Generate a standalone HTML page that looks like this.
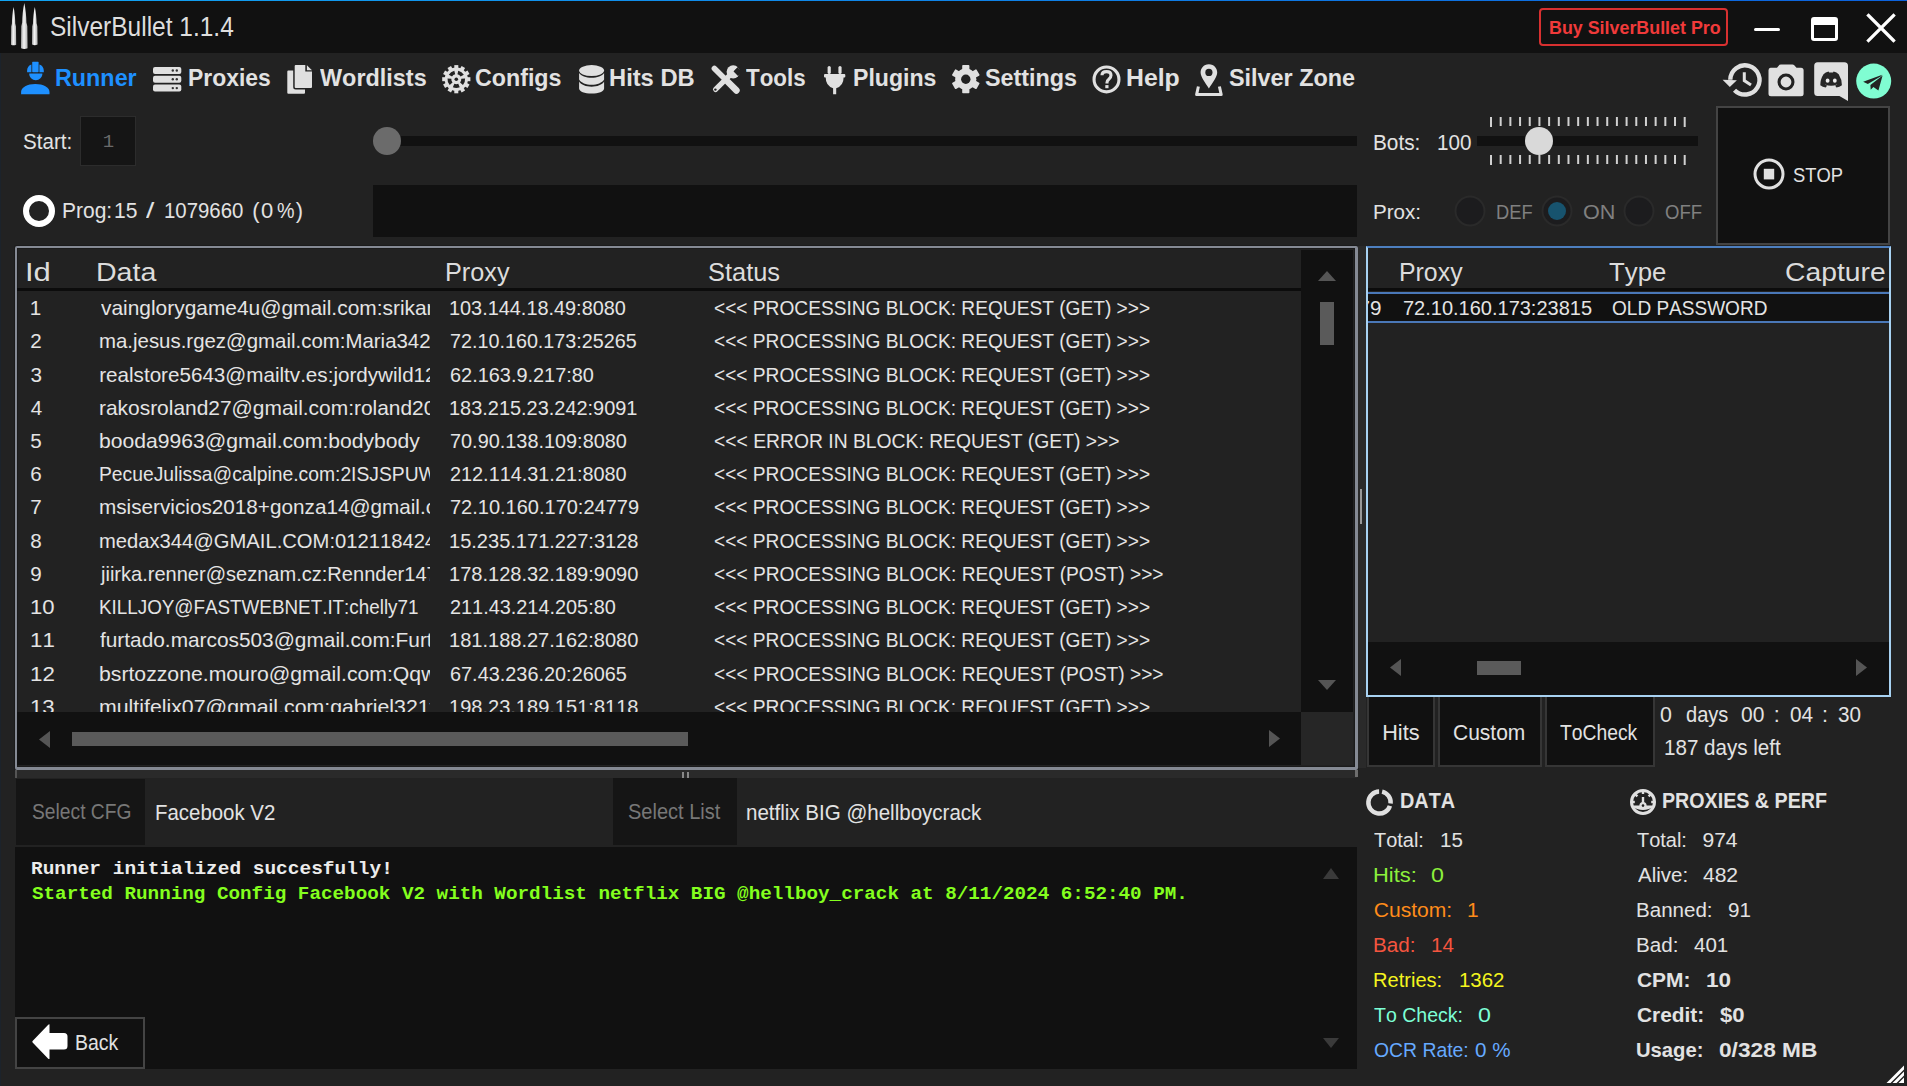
<!DOCTYPE html><html><head><meta charset="utf-8"><title>SilverBullet</title><style>
html,body{margin:0;padding:0;}
body{width:1907px;height:1086px;background:#222222;position:relative;overflow:hidden;font-family:"Liberation Sans", sans-serif;font-kerning:none;}
.r{position:absolute;box-sizing:border-box;}
.s{position:absolute;overflow:visible;}
.t{position:absolute;white-space:nowrap;line-height:1;transform-origin:0 0;font-kerning:none;}
.c{position:absolute;overflow:hidden;}
</style></head><body>
<div class="r" style="left:0px;top:0px;width:1907px;height:1px;background:linear-gradient(90deg,#12a4f2,#0c62dc);"></div>
<div class="r" style="left:0px;top:53px;width:1px;height:1033px;background:#1c232b;"></div>
<div class="r" style="left:0px;top:1px;width:1907px;height:52px;background:#111111;"></div>
<div class="t" style="left:50.29px;top:14.16px;font-size:26.74px;color:#dedede;transform:scaleX(0.9162);">SilverBullet 1.1.4</div>
<div class="r" style="left:1538.7px;top:7.8px;width:189.4px;height:38.6px;background:transparent;border:2px solid #d83030;border-radius:4px;"></div>
<div class="t" style="left:1549.20px;top:19.71px;font-size:17.59px;color:#f03a3a;font-weight:700;transform:scaleX(1.0159);">Buy SilverBullet Pro</div>
<div class="r" style="left:1754px;top:28px;width:26px;height:3px;background:#ffffff;border-radius:1.5px;"></div>
<div class="r" style="left:1811px;top:17px;width:27px;height:24px;background:transparent;border:3px solid #fff;border-top-width:8px;border-radius:3px;"></div>
<svg class="s" style="left:1866px;top:13px;" width="30" height="30" viewBox="0 0 30 30"><path d="M2.5 2.5 L27.5 27.5 M27.5 2.5 L2.5 27.5" stroke="#fff" stroke-width="3.2" stroke-linecap="square"/></svg>
<div class="t" style="left:55.14px;top:65.78px;font-size:24.71px;color:#1e90ff;font-weight:700;transform:scaleX(0.9448);">Runner</div>
<div class="t" style="left:187.57px;top:65.78px;font-size:24.71px;color:#e2e2e2;font-weight:700;transform:scaleX(0.9271);">Proxies</div>
<div class="t" style="left:319.68px;top:65.78px;font-size:24.71px;color:#e2e2e2;font-weight:700;transform:scaleX(0.9477);">Wordlists</div>
<div class="t" style="left:474.75px;top:65.78px;font-size:24.71px;color:#e2e2e2;font-weight:700;transform:scaleX(0.9407);">Configs</div>
<div class="t" style="left:609.41px;top:65.78px;font-size:24.71px;color:#e2e2e2;font-weight:700;transform:scaleX(0.9600);">Hits DB</div>
<div class="t" style="left:745.75px;top:65.78px;font-size:24.71px;color:#e2e2e2;font-weight:700;transform:scaleX(0.9040);">Tools</div>
<div class="t" style="left:852.76px;top:65.78px;font-size:24.71px;color:#e2e2e2;font-weight:700;transform:scaleX(0.9345);">Plugins</div>
<div class="t" style="left:984.93px;top:65.78px;font-size:24.71px;color:#e2e2e2;font-weight:700;transform:scaleX(0.9441);">Settings</div>
<div class="t" style="left:1125.54px;top:65.78px;font-size:24.71px;color:#e2e2e2;font-weight:700;transform:scaleX(1.0043);">Help</div>
<div class="t" style="left:1228.63px;top:65.78px;font-size:24.71px;color:#e2e2e2;font-weight:700;transform:scaleX(0.9465);">Silver Zone</div>
<div class="t" style="left:22.66px;top:131.71px;font-size:21.37px;color:#e2e2e2;transform:scaleX(0.9638);">Start:</div>
<div class="r" style="left:80px;top:116px;width:56px;height:50px;background:#151515;border:1px solid #2c2c2c;"></div>
<div class="t" style="left:102.63px;top:133.06px;font-size:18.98px;color:#6a6a6a;font-family:'Liberation Mono',monospace;">1</div>
<div class="r" style="left:387px;top:136px;width:970px;height:10px;background:#111111;"></div>
<svg class="s" style="left:373px;top:127px;" width="28" height="28" viewBox="0 0 28 28"><circle cx="14" cy="14" r="14" fill="#6b6b6b"/></svg>
<svg class="s" style="left:23px;top:195px;" width="32" height="32" viewBox="0 0 32 32"><circle cx="16" cy="16" r="13" fill="none" stroke="#fff" stroke-width="6"/></svg>
<div class="t" style="left:61.78px;top:199.54px;font-size:21.8px;color:#e2e2e2;transform:scaleX(0.9622);">Prog:</div>
<div class="t" style="left:114.10px;top:199.54px;font-size:21.8px;color:#e2e2e2;transform:scaleX(0.9644);">15</div>
<div class="t" style="left:145.50px;top:199.54px;font-size:21.8px;color:#e2e2e2;transform:scaleX(1.3704);">/</div>
<div class="t" style="left:164.15px;top:199.54px;font-size:21.8px;color:#e2e2e2;transform:scaleX(0.9350);">1079660</div>
<div class="t" style="left:252.15px;top:199.54px;font-size:21.8px;color:#e2e2e2;">(</div>
<div class="t" style="left:261.44px;top:199.54px;font-size:21.8px;color:#e2e2e2;transform:scaleX(1.0076);">0</div>
<div class="t" style="left:276.50px;top:199.54px;font-size:21.8px;color:#e2e2e2;transform:scaleX(0.9030);">%</div>
<div class="t" style="left:295.67px;top:199.54px;font-size:21.8px;color:#e2e2e2;">)</div>
<div class="r" style="left:373px;top:185px;width:984px;height:52px;background:#111111;"></div>
<div class="t" style="left:1373.39px;top:131.54px;font-size:21.8px;color:#e2e2e2;transform:scaleX(0.9543);">Bots:</div>
<div class="t" style="left:1436.73px;top:131.54px;font-size:21.8px;color:#e2e2e2;transform:scaleX(0.9480);">100</div>
<div class="r" style="left:1477px;top:136px;width:221px;height:10px;background:#111111;"></div>
<svg class="s" style="left:1489.6px;top:117px;" width="200" height="48" viewBox="0 0 200 48"><rect x="0.00" y="0" width="2" height="10" fill="#d0d0d0"/><rect x="0.00" y="38" width="2" height="10" fill="#d0d0d0"/><rect x="9.68" y="0" width="2" height="9" fill="#d0d0d0"/><rect x="9.68" y="38" width="2" height="9" fill="#d0d0d0"/><rect x="19.37" y="0" width="2" height="9" fill="#d0d0d0"/><rect x="19.37" y="38" width="2" height="9" fill="#d0d0d0"/><rect x="29.06" y="0" width="2" height="9" fill="#d0d0d0"/><rect x="29.06" y="38" width="2" height="9" fill="#d0d0d0"/><rect x="38.74" y="0" width="2" height="9" fill="#d0d0d0"/><rect x="38.74" y="38" width="2" height="9" fill="#d0d0d0"/><rect x="48.42" y="0" width="2" height="9" fill="#d0d0d0"/><rect x="48.42" y="38" width="2" height="9" fill="#d0d0d0"/><rect x="58.11" y="0" width="2" height="9" fill="#d0d0d0"/><rect x="58.11" y="38" width="2" height="9" fill="#d0d0d0"/><rect x="67.80" y="0" width="2" height="9" fill="#d0d0d0"/><rect x="67.80" y="38" width="2" height="9" fill="#d0d0d0"/><rect x="77.48" y="0" width="2" height="9" fill="#d0d0d0"/><rect x="77.48" y="38" width="2" height="9" fill="#d0d0d0"/><rect x="87.16" y="0" width="2" height="9" fill="#d0d0d0"/><rect x="87.16" y="38" width="2" height="9" fill="#d0d0d0"/><rect x="96.85" y="0" width="2" height="9" fill="#d0d0d0"/><rect x="96.85" y="38" width="2" height="9" fill="#d0d0d0"/><rect x="106.54" y="0" width="2" height="9" fill="#d0d0d0"/><rect x="106.54" y="38" width="2" height="9" fill="#d0d0d0"/><rect x="116.22" y="0" width="2" height="9" fill="#d0d0d0"/><rect x="116.22" y="38" width="2" height="9" fill="#d0d0d0"/><rect x="125.90" y="0" width="2" height="9" fill="#d0d0d0"/><rect x="125.90" y="38" width="2" height="9" fill="#d0d0d0"/><rect x="135.59" y="0" width="2" height="9" fill="#d0d0d0"/><rect x="135.59" y="38" width="2" height="9" fill="#d0d0d0"/><rect x="145.28" y="0" width="2" height="9" fill="#d0d0d0"/><rect x="145.28" y="38" width="2" height="9" fill="#d0d0d0"/><rect x="154.96" y="0" width="2" height="9" fill="#d0d0d0"/><rect x="154.96" y="38" width="2" height="9" fill="#d0d0d0"/><rect x="164.64" y="0" width="2" height="9" fill="#d0d0d0"/><rect x="164.64" y="38" width="2" height="9" fill="#d0d0d0"/><rect x="174.33" y="0" width="2" height="9" fill="#d0d0d0"/><rect x="174.33" y="38" width="2" height="9" fill="#d0d0d0"/><rect x="184.02" y="0" width="2" height="9" fill="#d0d0d0"/><rect x="184.02" y="38" width="2" height="9" fill="#d0d0d0"/><rect x="193.70" y="0" width="2" height="10" fill="#d0d0d0"/><rect x="193.70" y="38" width="2" height="10" fill="#d0d0d0"/></svg>
<svg class="s" style="left:1525px;top:127px;" width="28" height="28" viewBox="0 0 28 28"><circle cx="14" cy="14" r="14" fill="#d9d9d9"/></svg>
<div class="t" style="left:1373.31px;top:201.45px;font-size:21.08px;color:#e2e2e2;transform:scaleX(0.9770);">Prox:</div>
<svg class="s" style="left:1454.4px;top:195px;" width="32" height="32" viewBox="0 0 32 32"><circle cx="16" cy="16" r="14.5" fill="#1c1c1e" stroke="#2a2a2a" stroke-width="2"/></svg>
<svg class="s" style="left:1541px;top:195px;" width="32" height="32" viewBox="0 0 32 32"><circle cx="16" cy="16" r="14.5" fill="#1c1c1e" stroke="#2a2a2a" stroke-width="2"/></svg>
<svg class="s" style="left:1623px;top:195px;" width="32" height="32" viewBox="0 0 32 32"><circle cx="16" cy="16" r="14.5" fill="#1c1c1e" stroke="#2a2a2a" stroke-width="2"/></svg>
<svg class="s" style="left:1548px;top:202px;" width="18" height="18" viewBox="0 0 18 18"><circle cx="9" cy="9" r="9" fill="#17536e"/></svg>
<div class="t" style="left:1496.30px;top:201.45px;font-size:21.08px;color:#808080;transform:scaleX(0.8690);">DEF</div>
<div class="t" style="left:1582.68px;top:201.45px;font-size:21.08px;color:#808080;transform:scaleX(1.0241);">ON</div>
<div class="t" style="left:1664.92px;top:201.45px;font-size:21.08px;color:#808080;transform:scaleX(0.8807);">OFF</div>
<div class="r" style="left:1715.6px;top:106.2px;width:174.6px;height:138.6px;background:#111111;border:2px solid #444;"></div>
<svg class="s" style="left:1753px;top:158px;" width="32" height="32" viewBox="0 0 32 32"><circle cx="16" cy="16" r="14" fill="none" stroke="#e0e0e0" stroke-width="3"/><rect x="10.8" y="10.8" width="10.4" height="10.6" fill="#e0e0e0"/></svg>
<div class="t" style="left:1792.97px;top:164.91px;font-size:20.78px;color:#e2e2e2;transform:scaleX(0.8838);">STOP</div>
<div class="r" style="left:15px;top:246px;width:1343px;height:524px;background:#222222;border:2px solid #858a94;border-right-width:3px;border-bottom-width:3px;box-shadow:0 0 0 1px #1b1b1b, inset 0 0 0 1px #1b1b1b;border-radius:2px;"></div>
<div class="r" style="left:17px;top:288px;width:1284px;height:2.5px;background:#0c0c0c;"></div>
<div class="r" style="left:1301px;top:250px;width:52px;height:462px;background:#111111;"></div>
<div class="r" style="left:17px;top:712px;width:1284px;height:53px;background:#111111;"></div>
<div class="r" style="left:1301px;top:712px;width:52px;height:53px;background:#262626;"></div>
<svg class="s" style="left:1318px;top:271px;" width="18" height="10" viewBox="0 0 18 10"><path d="M0 10 L9 0 L18 10Z" fill="#555"/></svg>
<svg class="s" style="left:1318px;top:680px;" width="18" height="10" viewBox="0 0 18 10"><path d="M0 0 L9 10 L18 0Z" fill="#555"/></svg>
<div class="r" style="left:1319.6px;top:302px;width:14.4px;height:43px;background:#5a5a5a;"></div>
<svg class="s" style="left:39px;top:730.5px;" width="11" height="17" viewBox="0 0 11 17"><path d="M11 0 L0 8.5 L11 17Z" fill="#555"/></svg>
<svg class="s" style="left:1269px;top:729.5px;" width="11" height="17" viewBox="0 0 11 17"><path d="M0 0 L11 8.5 L0 17Z" fill="#555"/></svg>
<div class="r" style="left:72px;top:732px;width:616px;height:14px;background:#5a5a5a;"></div>
<div class="t" style="left:24.84px;top:260.21px;font-size:25.73px;color:#dcdcdc;transform:scaleX(1.2051);">Id</div>
<div class="t" style="left:95.66px;top:260.21px;font-size:25.73px;color:#dcdcdc;transform:scaleX(1.1103);">Data</div>
<div class="t" style="left:445.03px;top:260.21px;font-size:25.73px;color:#dcdcdc;transform:scaleX(0.9810);">Proxy</div>
<div class="t" style="left:708.15px;top:260.21px;font-size:25.73px;color:#dcdcdc;transform:scaleX(0.9881);">Status</div>
<div class="c" style="left:17px;top:290px;width:1284px;height:422px"><div style="position:absolute;left:-17px;top:-290px;width:1907px;height:1086px"><div class="t" style="left:29.63px;top:298.12px;font-size:20.64px;color:#e4e4e4;">1</div></div></div>
<div class="c" style="left:17px;top:290px;width:413px;height:422px"><div style="position:absolute;left:-17px;top:-290px;width:1907px;height:1086px"><div class="t" style="left:100.53px;top:298.12px;font-size:20.64px;color:#e4e4e4;transform:scaleX(1.0135);">vainglorygame4u@gmail.com:srikar</div></div></div>
<div class="c" style="left:17px;top:290px;width:1284px;height:422px"><div style="position:absolute;left:-17px;top:-290px;width:1907px;height:1086px"><div class="t" style="left:449.48px;top:298.12px;font-size:20.64px;color:#e4e4e4;transform:scaleX(0.9638);">103.144.18.49:8080</div></div></div>
<div class="c" style="left:17px;top:290px;width:1284px;height:422px"><div style="position:absolute;left:-17px;top:-290px;width:1907px;height:1086px"><div class="t" style="left:714.06px;top:298.12px;font-size:20.64px;color:#e4e4e4;transform:scaleX(0.9281);">&lt;&lt;&lt; PROCESSING BLOCK: REQUEST (GET) &gt;&gt;&gt;</div></div></div>
<div class="c" style="left:17px;top:290px;width:1284px;height:422px"><div style="position:absolute;left:-17px;top:-290px;width:1907px;height:1086px"><div class="t" style="left:30.16px;top:331.34px;font-size:20.64px;color:#e4e4e4;">2</div></div></div>
<div class="c" style="left:17px;top:290px;width:413px;height:422px"><div style="position:absolute;left:-17px;top:-290px;width:1907px;height:1086px"><div class="t" style="left:99.24px;top:331.34px;font-size:20.64px;color:#e4e4e4;transform:scaleX(0.9896);">ma.jesus.rgez@gmail.com:Maria342</div></div></div>
<div class="c" style="left:17px;top:290px;width:1284px;height:422px"><div style="position:absolute;left:-17px;top:-290px;width:1907px;height:1086px"><div class="t" style="left:449.99px;top:331.34px;font-size:20.64px;color:#e4e4e4;transform:scaleX(0.9576);">72.10.160.173:25265</div></div></div>
<div class="c" style="left:17px;top:290px;width:1284px;height:422px"><div style="position:absolute;left:-17px;top:-290px;width:1907px;height:1086px"><div class="t" style="left:714.06px;top:331.34px;font-size:20.64px;color:#e4e4e4;transform:scaleX(0.9281);">&lt;&lt;&lt; PROCESSING BLOCK: REQUEST (GET) &gt;&gt;&gt;</div></div></div>
<div class="c" style="left:17px;top:290px;width:1284px;height:422px"><div style="position:absolute;left:-17px;top:-290px;width:1907px;height:1086px"><div class="t" style="left:30.41px;top:364.56px;font-size:20.64px;color:#e4e4e4;">3</div></div></div>
<div class="c" style="left:17px;top:290px;width:413px;height:422px"><div style="position:absolute;left:-17px;top:-290px;width:1907px;height:1086px"><div class="t" style="left:99.23px;top:364.56px;font-size:20.64px;color:#e4e4e4;">realstore5643@mailtv.es:jordywild12</div></div></div>
<div class="c" style="left:17px;top:290px;width:1284px;height:422px"><div style="position:absolute;left:-17px;top:-290px;width:1907px;height:1086px"><div class="t" style="left:449.99px;top:364.56px;font-size:20.64px;color:#e4e4e4;transform:scaleX(0.9650);">62.163.9.217:80</div></div></div>
<div class="c" style="left:17px;top:290px;width:1284px;height:422px"><div style="position:absolute;left:-17px;top:-290px;width:1907px;height:1086px"><div class="t" style="left:714.06px;top:364.56px;font-size:20.64px;color:#e4e4e4;transform:scaleX(0.9281);">&lt;&lt;&lt; PROCESSING BLOCK: REQUEST (GET) &gt;&gt;&gt;</div></div></div>
<div class="c" style="left:17px;top:290px;width:1284px;height:422px"><div style="position:absolute;left:-17px;top:-290px;width:1907px;height:1086px"><div class="t" style="left:30.73px;top:397.78px;font-size:20.64px;color:#e4e4e4;">4</div></div></div>
<div class="c" style="left:17px;top:290px;width:413px;height:422px"><div style="position:absolute;left:-17px;top:-290px;width:1907px;height:1086px"><div class="t" style="left:99.21px;top:397.78px;font-size:20.64px;color:#e4e4e4;transform:scaleX(1.0143);">rakosroland27@gmail.com:roland20</div></div></div>
<div class="c" style="left:17px;top:290px;width:1284px;height:422px"><div style="position:absolute;left:-17px;top:-290px;width:1907px;height:1086px"><div class="t" style="left:449.48px;top:397.78px;font-size:20.64px;color:#e4e4e4;transform:scaleX(0.9665);">183.215.23.242:9091</div></div></div>
<div class="c" style="left:17px;top:290px;width:1284px;height:422px"><div style="position:absolute;left:-17px;top:-290px;width:1907px;height:1086px"><div class="t" style="left:714.06px;top:397.78px;font-size:20.64px;color:#e4e4e4;transform:scaleX(0.9281);">&lt;&lt;&lt; PROCESSING BLOCK: REQUEST (GET) &gt;&gt;&gt;</div></div></div>
<div class="c" style="left:17px;top:290px;width:1284px;height:422px"><div style="position:absolute;left:-17px;top:-290px;width:1907px;height:1086px"><div class="t" style="left:30.37px;top:431.00px;font-size:20.64px;color:#e4e4e4;">5</div></div></div>
<div class="c" style="left:17px;top:290px;width:413px;height:422px"><div style="position:absolute;left:-17px;top:-290px;width:1907px;height:1086px"><div class="t" style="left:99.24px;top:431.00px;font-size:20.64px;color:#e4e4e4;transform:scaleX(1.0241);">booda9963@gmail.com:bodybody</div></div></div>
<div class="c" style="left:17px;top:290px;width:1284px;height:422px"><div style="position:absolute;left:-17px;top:-290px;width:1907px;height:1086px"><div class="t" style="left:449.98px;top:431.00px;font-size:20.64px;color:#e4e4e4;transform:scaleX(0.9638);">70.90.138.109:8080</div></div></div>
<div class="c" style="left:17px;top:290px;width:1284px;height:422px"><div style="position:absolute;left:-17px;top:-290px;width:1907px;height:1086px"><div class="t" style="left:714.05px;top:431.00px;font-size:20.64px;color:#e4e4e4;transform:scaleX(0.9362);">&lt;&lt;&lt; ERROR IN BLOCK: REQUEST (GET) &gt;&gt;&gt;</div></div></div>
<div class="c" style="left:17px;top:290px;width:1284px;height:422px"><div style="position:absolute;left:-17px;top:-290px;width:1907px;height:1086px"><div class="t" style="left:30.15px;top:464.22px;font-size:20.64px;color:#e4e4e4;">6</div></div></div>
<div class="c" style="left:17px;top:290px;width:413px;height:422px"><div style="position:absolute;left:-17px;top:-290px;width:1907px;height:1086px"><div class="t" style="left:99.02px;top:464.22px;font-size:20.64px;color:#e4e4e4;transform:scaleX(0.9347);">PecueJulissa@calpine.com:2ISJSPUW</div></div></div>
<div class="c" style="left:17px;top:290px;width:1284px;height:422px"><div style="position:absolute;left:-17px;top:-290px;width:1907px;height:1086px"><div class="t" style="left:450.00px;top:464.22px;font-size:20.64px;color:#e4e4e4;transform:scaleX(0.9626);">212.114.31.21:8080</div></div></div>
<div class="c" style="left:17px;top:290px;width:1284px;height:422px"><div style="position:absolute;left:-17px;top:-290px;width:1907px;height:1086px"><div class="t" style="left:714.06px;top:464.22px;font-size:20.64px;color:#e4e4e4;transform:scaleX(0.9281);">&lt;&lt;&lt; PROCESSING BLOCK: REQUEST (GET) &gt;&gt;&gt;</div></div></div>
<div class="c" style="left:17px;top:290px;width:1284px;height:422px"><div style="position:absolute;left:-17px;top:-290px;width:1907px;height:1086px"><div class="t" style="left:30.14px;top:497.44px;font-size:20.64px;color:#e4e4e4;">7</div></div></div>
<div class="c" style="left:17px;top:290px;width:413px;height:422px"><div style="position:absolute;left:-17px;top:-290px;width:1907px;height:1086px"><div class="t" style="left:99.22px;top:497.44px;font-size:20.64px;color:#e4e4e4;transform:scaleX(1.0043);">msiservicios2018+gonza14@gmail.c</div></div></div>
<div class="c" style="left:17px;top:290px;width:1284px;height:422px"><div style="position:absolute;left:-17px;top:-290px;width:1907px;height:1086px"><div class="t" style="left:449.97px;top:497.44px;font-size:20.64px;color:#e4e4e4;transform:scaleX(0.9695);">72.10.160.170:24779</div></div></div>
<div class="c" style="left:17px;top:290px;width:1284px;height:422px"><div style="position:absolute;left:-17px;top:-290px;width:1907px;height:1086px"><div class="t" style="left:714.06px;top:497.44px;font-size:20.64px;color:#e4e4e4;transform:scaleX(0.9281);">&lt;&lt;&lt; PROCESSING BLOCK: REQUEST (GET) &gt;&gt;&gt;</div></div></div>
<div class="c" style="left:17px;top:290px;width:1284px;height:422px"><div style="position:absolute;left:-17px;top:-290px;width:1907px;height:1086px"><div class="t" style="left:30.30px;top:530.66px;font-size:20.64px;color:#e4e4e4;">8</div></div></div>
<div class="c" style="left:17px;top:290px;width:413px;height:422px"><div style="position:absolute;left:-17px;top:-290px;width:1907px;height:1086px"><div class="t" style="left:99.26px;top:530.66px;font-size:20.64px;color:#e4e4e4;transform:scaleX(0.9792);">medax344@GMAIL.COM:012118424</div></div></div>
<div class="c" style="left:17px;top:290px;width:1284px;height:422px"><div style="position:absolute;left:-17px;top:-290px;width:1907px;height:1086px"><div class="t" style="left:449.47px;top:530.66px;font-size:20.64px;color:#e4e4e4;transform:scaleX(0.9717);">15.235.171.227:3128</div></div></div>
<div class="c" style="left:17px;top:290px;width:1284px;height:422px"><div style="position:absolute;left:-17px;top:-290px;width:1907px;height:1086px"><div class="t" style="left:714.06px;top:530.66px;font-size:20.64px;color:#e4e4e4;transform:scaleX(0.9281);">&lt;&lt;&lt; PROCESSING BLOCK: REQUEST (GET) &gt;&gt;&gt;</div></div></div>
<div class="c" style="left:17px;top:290px;width:1284px;height:422px"><div style="position:absolute;left:-17px;top:-290px;width:1907px;height:1086px"><div class="t" style="left:30.23px;top:563.88px;font-size:20.64px;color:#e4e4e4;">9</div></div></div>
<div class="c" style="left:17px;top:290px;width:413px;height:422px"><div style="position:absolute;left:-17px;top:-290px;width:1907px;height:1086px"><div class="t" style="left:101.09px;top:563.88px;font-size:20.64px;color:#e4e4e4;transform:scaleX(0.9716);">jiirka.renner@seznam.cz:Rennder147</div></div></div>
<div class="c" style="left:17px;top:290px;width:1284px;height:422px"><div style="position:absolute;left:-17px;top:-290px;width:1907px;height:1086px"><div class="t" style="left:449.47px;top:563.88px;font-size:20.64px;color:#e4e4e4;transform:scaleX(0.9712);">178.128.32.189:9090</div></div></div>
<div class="c" style="left:17px;top:290px;width:1284px;height:422px"><div style="position:absolute;left:-17px;top:-290px;width:1907px;height:1086px"><div class="t" style="left:714.05px;top:563.88px;font-size:20.64px;color:#e4e4e4;transform:scaleX(0.9294);">&lt;&lt;&lt; PROCESSING BLOCK: REQUEST (POST) &gt;&gt;&gt;</div></div></div>
<div class="c" style="left:17px;top:290px;width:1284px;height:422px"><div style="position:absolute;left:-17px;top:-290px;width:1907px;height:1086px"><div class="t" style="left:29.52px;top:597.10px;font-size:20.64px;color:#e4e4e4;transform:scaleX(1.0690);">10</div></div></div>
<div class="c" style="left:17px;top:290px;width:413px;height:422px"><div style="position:absolute;left:-17px;top:-290px;width:1907px;height:1086px"><div class="t" style="left:99.05px;top:597.10px;font-size:20.64px;color:#e4e4e4;transform:scaleX(0.9130);">KILLJOY@FASTWEBNET.IT:chelly71</div></div></div>
<div class="c" style="left:17px;top:290px;width:1284px;height:422px"><div style="position:absolute;left:-17px;top:-290px;width:1907px;height:1086px"><div class="t" style="left:450.00px;top:597.10px;font-size:20.64px;color:#e4e4e4;transform:scaleX(0.9635);">211.43.214.205:80</div></div></div>
<div class="c" style="left:17px;top:290px;width:1284px;height:422px"><div style="position:absolute;left:-17px;top:-290px;width:1907px;height:1086px"><div class="t" style="left:714.06px;top:597.10px;font-size:20.64px;color:#e4e4e4;transform:scaleX(0.9281);">&lt;&lt;&lt; PROCESSING BLOCK: REQUEST (GET) &gt;&gt;&gt;</div></div></div>
<div class="c" style="left:17px;top:290px;width:1284px;height:422px"><div style="position:absolute;left:-17px;top:-290px;width:1907px;height:1086px"><div class="t" style="left:29.50px;top:630.32px;font-size:20.64px;color:#e4e4e4;transform:scaleX(1.0796);">11</div></div></div>
<div class="c" style="left:17px;top:290px;width:413px;height:422px"><div style="position:absolute;left:-17px;top:-290px;width:1907px;height:1086px"><div class="t" style="left:100.30px;top:630.32px;font-size:20.64px;color:#e4e4e4;transform:scaleX(1.0101);">furtado.marcos503@gmail.com:Furt</div></div></div>
<div class="c" style="left:17px;top:290px;width:1284px;height:422px"><div style="position:absolute;left:-17px;top:-290px;width:1907px;height:1086px"><div class="t" style="left:449.47px;top:630.32px;font-size:20.64px;color:#e4e4e4;transform:scaleX(0.9712);">181.188.27.162:8080</div></div></div>
<div class="c" style="left:17px;top:290px;width:1284px;height:422px"><div style="position:absolute;left:-17px;top:-290px;width:1907px;height:1086px"><div class="t" style="left:714.06px;top:630.32px;font-size:20.64px;color:#e4e4e4;transform:scaleX(0.9281);">&lt;&lt;&lt; PROCESSING BLOCK: REQUEST (GET) &gt;&gt;&gt;</div></div></div>
<div class="c" style="left:17px;top:290px;width:1284px;height:422px"><div style="position:absolute;left:-17px;top:-290px;width:1907px;height:1086px"><div class="t" style="left:29.50px;top:663.54px;font-size:20.64px;color:#e4e4e4;transform:scaleX(1.0812);">12</div></div></div>
<div class="c" style="left:17px;top:290px;width:413px;height:422px"><div style="position:absolute;left:-17px;top:-290px;width:1907px;height:1086px"><div class="t" style="left:99.23px;top:663.54px;font-size:20.64px;color:#e4e4e4;transform:scaleX(1.0284);">bsrtozzone.mouro@gmail.com:Qqw</div></div></div>
<div class="c" style="left:17px;top:290px;width:1284px;height:422px"><div style="position:absolute;left:-17px;top:-290px;width:1907px;height:1086px"><div class="t" style="left:449.99px;top:663.54px;font-size:20.64px;color:#e4e4e4;transform:scaleX(0.9641);">67.43.236.20:26065</div></div></div>
<div class="c" style="left:17px;top:290px;width:1284px;height:422px"><div style="position:absolute;left:-17px;top:-290px;width:1907px;height:1086px"><div class="t" style="left:714.05px;top:663.54px;font-size:20.64px;color:#e4e4e4;transform:scaleX(0.9294);">&lt;&lt;&lt; PROCESSING BLOCK: REQUEST (POST) &gt;&gt;&gt;</div></div></div>
<div class="c" style="left:17px;top:290px;width:1284px;height:422px"><div style="position:absolute;left:-17px;top:-290px;width:1907px;height:1086px"><div class="t" style="left:29.51px;top:696.76px;font-size:20.64px;color:#e4e4e4;transform:scaleX(1.0743);">13</div></div></div>
<div class="c" style="left:17px;top:290px;width:413px;height:422px"><div style="position:absolute;left:-17px;top:-290px;width:1907px;height:1086px"><div class="t" style="left:99.18px;top:696.76px;font-size:20.64px;color:#e4e4e4;transform:scaleX(1.0327);">multifelix07@gmail.com:gabriel321f</div></div></div>
<div class="c" style="left:17px;top:290px;width:1284px;height:422px"><div style="position:absolute;left:-17px;top:-290px;width:1907px;height:1086px"><div class="t" style="left:449.47px;top:696.76px;font-size:20.64px;color:#e4e4e4;transform:scaleX(0.9717);">198.23.189.151:8118</div></div></div>
<div class="c" style="left:17px;top:290px;width:1284px;height:422px"><div style="position:absolute;left:-17px;top:-290px;width:1907px;height:1086px"><div class="t" style="left:714.06px;top:696.76px;font-size:20.64px;color:#e4e4e4;transform:scaleX(0.9281);">&lt;&lt;&lt; PROCESSING BLOCK: REQUEST (GET) &gt;&gt;&gt;</div></div></div>
<div class="r" style="left:15px;top:770px;width:1342px;height:8px;background:#2a2a2a;"></div>
<div class="r" style="left:1355px;top:770px;width:2.5px;height:7px;background:#6e6e6e;"></div>
<div class="r" style="left:15px;top:770px;width:2px;height:8px;background:#555555;"></div>
<div class="r" style="left:682px;top:772px;width:2px;height:5.5px;background:#888;"></div>
<div class="r" style="left:687px;top:772px;width:2px;height:5.5px;background:#888;"></div>
<div class="r" style="left:1358px;top:246px;width:8px;height:522px;background:#2a2a2a;"></div>
<div class="r" style="left:1360px;top:489px;width:2.3px;height:35px;background:#999;"></div>
<div class="r" style="left:1366px;top:246px;width:525px;height:451px;background:#222222;border:2px solid #a8d2f2;border-top-color:#4d7fbf;"></div>
<div class="r" style="left:1368px;top:288px;width:521px;height:2.5px;background:#0c0c0c;"></div>
<div class="r" style="left:1368px;top:292px;width:521px;height:30.7px;background:#111111;border-top:2px solid #4a78b8;border-bottom:2px solid #4a78b8;"></div>
<div class="t" style="left:1398.96px;top:259.81px;font-size:25.73px;color:#dcdcdc;transform:scaleX(0.9668);">Proxy</div>
<div class="t" style="left:1608.52px;top:259.81px;font-size:25.73px;color:#dcdcdc;transform:scaleX(1.0022);">Type</div>
<div class="c" style="left:1368px;top:248px;width:521px;height:42px"><div style="position:absolute;left:-1368px;top:-248px;width:1907px;height:1086px"><div class="t" style="left:1784.56px;top:259.81px;font-size:25.73px;color:#dcdcdc;transform:scaleX(1.1000);">Capture</div></div></div>
<div class="c" style="left:1368px;top:294px;width:521px;height:27px"><div style="position:absolute;left:-1368px;top:-294px;width:1907px;height:1086px"><div class="t" style="left:1358.54px;top:298.32px;font-size:20.64px;color:#e4e4e4;">79</div></div></div>
<div class="t" style="left:1402.97px;top:298.32px;font-size:20.64px;color:#e4e4e4;transform:scaleX(0.9695);">72.10.160.173:23815</div>
<div class="t" style="left:1612.10px;top:298.32px;font-size:20.64px;color:#e4e4e4;transform:scaleX(0.9224);">OLD PASSWORD</div>
<div class="r" style="left:1368px;top:642px;width:521px;height:53px;background:#111111;"></div>
<svg class="s" style="left:1390px;top:659px;" width="11" height="17" viewBox="0 0 11 17"><path d="M11 0 L0 8.5 L11 17Z" fill="#555"/></svg>
<svg class="s" style="left:1856px;top:659px;" width="11" height="17" viewBox="0 0 11 17"><path d="M0 0 L11 8.5 L0 17Z" fill="#555"/></svg>
<div class="r" style="left:1476.8px;top:660.8px;width:44.0px;height:14.0px;background:#5a5a5a;"></div>
<div class="r" style="left:1366.8px;top:697px;width:68.4px;height:70px;background:#111111;border:2px solid #363636;border-top:none;"></div>
<div class="r" style="left:1437.5px;top:697px;width:104.1px;height:70px;background:#111111;border:2px solid #363636;border-top:none;"></div>
<div class="r" style="left:1544.6px;top:697px;width:110.0px;height:70px;background:#111111;border:2px solid #363636;border-top:none;"></div>
<div class="t" style="left:1382.22px;top:721.86px;font-size:21.66px;color:#e2e2e2;">Hits</div>
<div class="t" style="left:1453.43px;top:721.86px;font-size:21.66px;color:#e2e2e2;transform:scaleX(0.9695);">Custom</div>
<div class="t" style="left:1560.17px;top:721.86px;font-size:21.66px;color:#e2e2e2;transform:scaleX(0.8908);">ToCheck</div>
<div class="t" style="left:1659.67px;top:704.99px;font-size:21.51px;color:#e2e2e2;transform:scaleX(0.9920);">0</div>
<div class="t" style="left:1685.56px;top:704.99px;font-size:21.51px;color:#e2e2e2;transform:scaleX(0.9325);">days</div>
<div class="t" style="left:1741.18px;top:704.99px;font-size:21.51px;color:#e2e2e2;transform:scaleX(0.9755);">00</div>
<div class="t" style="left:1773.64px;top:704.99px;font-size:21.51px;color:#e2e2e2;">:</div>
<div class="t" style="left:1789.69px;top:704.99px;font-size:21.51px;color:#e2e2e2;transform:scaleX(0.9664);">04</div>
<div class="t" style="left:1822.04px;top:704.99px;font-size:21.51px;color:#e2e2e2;">:</div>
<div class="t" style="left:1838.21px;top:704.99px;font-size:21.51px;color:#e2e2e2;transform:scaleX(0.9611);">30</div>
<div class="t" style="left:1664.03px;top:737.79px;font-size:21.51px;color:#e2e2e2;transform:scaleX(0.9578);">187 days left</div>
<div class="r" style="left:16px;top:779px;width:129px;height:66px;background:#151515;"></div>
<div class="r" style="left:613px;top:778px;width:123.5px;height:67px;background:#151515;"></div>
<div class="t" style="left:31.53px;top:800.54px;font-size:21.8px;color:#777777;transform:scaleX(0.8833);">Select CFG</div>
<div class="t" style="left:155.43px;top:801.97px;font-size:22.24px;color:#e2e2e2;transform:scaleX(0.9180);">Facebook V2</div>
<div class="t" style="left:628.09px;top:800.54px;font-size:21.8px;color:#777777;transform:scaleX(0.9183);">Select List</div>
<div class="t" style="left:746.04px;top:801.97px;font-size:22.24px;color:#e2e2e2;transform:scaleX(0.9234);">netflix BIG @hellboycrack</div>
<div class="r" style="left:15px;top:847px;width:1342px;height:222px;background:#111111;"></div>
<div class="t" style="left:31.00px;top:860.44px;font-size:19px;color:#ececec;font-weight:700;font-family:'Liberation Mono',monospace;transform:scaleX(1.0237);">Runner initialized succesfully!</div>
<div class="t" style="left:31.94px;top:885.24px;font-size:19px;color:#84ff1e;font-weight:700;font-family:'Liberation Mono',monospace;transform:scaleX(1.0138);">Started Running Config Facebook V2 with Wordlist netflix BIG @hellboy_crack at 8/11/2024 6:52:40 PM.</div>
<svg class="s" style="left:1322.6px;top:868px;" width="16" height="11" viewBox="0 0 16 11"><path d="M0 11 L8 0 L16 11Z" fill="#3a3a3a"/></svg>
<svg class="s" style="left:1322.6px;top:1037.8px;" width="16" height="10" viewBox="0 0 16 10"><path d="M0 0 L8 10 L16 0Z" fill="#3a3a3a"/></svg>
<div class="r" style="left:14.7px;top:1017px;width:130.0px;height:52px;background:#111111;border:2px solid #444;"></div>
<div class="t" style="left:75.40px;top:1030.81px;font-size:22.67px;color:#e2e2e2;transform:scaleX(0.8585);">Back</div>
<div class="t" style="left:1399.67px;top:790.59px;font-size:21.51px;color:#e2e2e2;font-weight:700;transform:scaleX(0.9232);">DATA</div>
<div class="t" style="left:1661.68px;top:790.59px;font-size:21.51px;color:#e2e2e2;font-weight:700;transform:scaleX(0.9144);">PROXIES &amp; PERF</div>
<div class="t" style="left:1374.35px;top:828.65px;font-size:21.08px;color:#e2e2e2;transform:scaleX(0.9459);">Total:</div>
<div class="t" style="left:1440.44px;top:828.65px;font-size:21.08px;color:#e2e2e2;transform:scaleX(0.9734);">15</div>
<div class="t" style="left:1373.00px;top:863.70px;font-size:21.08px;color:#8cf03c;transform:scaleX(1.0388);">Hits:</div>
<div class="t" style="left:1431.49px;top:863.70px;font-size:21.08px;color:#8cf03c;transform:scaleX(1.1015);">0</div>
<div class="t" style="left:1373.73px;top:898.75px;font-size:21.08px;color:#ff8c1a;">Custom:</div>
<div class="t" style="left:1467.41px;top:898.75px;font-size:21.08px;color:#ff8c1a;transform:scaleX(0.9902);">1</div>
<div class="t" style="left:1373.11px;top:933.80px;font-size:21.08px;color:#f5553f;transform:scaleX(0.9796);">Bad:</div>
<div class="t" style="left:1431.43px;top:933.80px;font-size:21.08px;color:#f5553f;transform:scaleX(0.9753);">14</div>
<div class="t" style="left:1373.15px;top:968.85px;font-size:21.08px;color:#f5f51e;transform:scaleX(0.9525);">Retries:</div>
<div class="t" style="left:1458.84px;top:968.85px;font-size:21.08px;color:#f5f51e;transform:scaleX(0.9700);">1362</div>
<div class="t" style="left:1374.36px;top:1003.90px;font-size:21.08px;color:#7dffd6;transform:scaleX(0.9267);">To Check:</div>
<div class="t" style="left:1478.49px;top:1003.90px;font-size:21.08px;color:#7dffd6;transform:scaleX(1.1015);">0</div>
<div class="t" style="left:1373.88px;top:1038.95px;font-size:21.08px;color:#66aaff;transform:scaleX(0.9185);">OCR Rate:</div>
<div class="t" style="left:1475.19px;top:1038.95px;font-size:21.08px;color:#66aaff;transform:scaleX(0.9784);">0 %</div>
<div class="t" style="left:1637.25px;top:828.65px;font-size:21.08px;color:#e2e2e2;transform:scaleX(0.9459);">Total:</div>
<div class="t" style="left:1702.41px;top:828.65px;font-size:21.08px;color:#e2e2e2;">974</div>
<div class="t" style="left:1637.66px;top:863.70px;font-size:21.08px;color:#e2e2e2;transform:scaleX(0.9721);">Alive:</div>
<div class="t" style="left:1702.92px;top:863.70px;font-size:21.08px;color:#e2e2e2;">482</div>
<div class="t" style="left:1636.01px;top:898.75px;font-size:21.08px;color:#e2e2e2;transform:scaleX(0.9749);">Banned:</div>
<div class="t" style="left:1728.03px;top:898.75px;font-size:21.08px;color:#e2e2e2;transform:scaleX(0.9799);">91</div>
<div class="t" style="left:1636.01px;top:933.80px;font-size:21.08px;color:#e2e2e2;transform:scaleX(0.9771);">Bad:</div>
<div class="t" style="left:1693.53px;top:933.80px;font-size:21.08px;color:#e2e2e2;transform:scaleX(0.9745);">401</div>
<div class="t" style="left:1636.84px;top:968.85px;font-size:21.08px;color:#e2e2e2;font-weight:700;transform:scaleX(0.9908);">CPM:</div>
<div class="t" style="left:1705.58px;top:968.85px;font-size:21.08px;color:#e2e2e2;font-weight:700;transform:scaleX(1.0680);">10</div>
<div class="t" style="left:1636.85px;top:1003.90px;font-size:21.08px;color:#e2e2e2;font-weight:700;transform:scaleX(0.9888);">Credit:</div>
<div class="t" style="left:1720.01px;top:1003.90px;font-size:21.08px;color:#e2e2e2;font-weight:700;transform:scaleX(1.0491);">$0</div>
<div class="t" style="left:1636.48px;top:1038.95px;font-size:21.08px;color:#e2e2e2;font-weight:700;transform:scaleX(0.9597);">Usage:</div>
<div class="t" style="left:1719.40px;top:1038.95px;font-size:21.08px;color:#e2e2e2;font-weight:700;transform:scaleX(1.0759);">0/328 MB</div>
<svg class="s" style="left:10.6px;top:6.6px;" width="5.2" height="39" viewBox="0 0 5.2 39"><defs><linearGradient id="bg10" x1="0" x2="1"><stop offset="0" stop-color="#a8a8a8"/><stop offset="0.45" stop-color="#f4f4f4"/><stop offset="1" stop-color="#b0b0b0"/></linearGradient></defs><path d="M2.60 0 C1.56 4.68 0.94 11.70 0.94 16.38 L0.21 19.50 L0 37.83 Q2.60 39.00 5.20 37.83 L4.99 19.50 L4.26 16.38 C4.26 11.70 3.64 4.68 2.60 0Z" fill="url(#bg10)"/></svg>
<svg class="s" style="left:20.8px;top:2.8px;" width="6.6" height="46.6" viewBox="0 0 6.6 46.6"><defs><linearGradient id="bg20" x1="0" x2="1"><stop offset="0" stop-color="#a8a8a8"/><stop offset="0.45" stop-color="#f4f4f4"/><stop offset="1" stop-color="#b0b0b0"/></linearGradient></defs><path d="M3.30 0 C1.98 5.59 1.19 13.98 1.19 19.57 L0.26 23.30 L0 45.20 Q3.30 46.60 6.60 45.20 L6.34 23.30 L5.41 19.57 C5.41 13.98 4.62 5.59 3.30 0Z" fill="url(#bg20)"/></svg>
<svg class="s" style="left:31.9px;top:6.6px;" width="5.6" height="38.8" viewBox="0 0 5.6 38.8"><defs><linearGradient id="bg31" x1="0" x2="1"><stop offset="0" stop-color="#a8a8a8"/><stop offset="0.45" stop-color="#f4f4f4"/><stop offset="1" stop-color="#b0b0b0"/></linearGradient></defs><path d="M2.80 0 C1.68 4.66 1.01 11.64 1.01 16.30 L0.22 19.40 L0 37.64 Q2.80 38.80 5.60 37.64 L5.38 19.40 L4.59 16.30 C4.59 11.64 3.92 4.66 2.80 0Z" fill="url(#bg31)"/></svg>
<svg class="s" style="left:21px;top:61px;" width="29" height="34" viewBox="0 0 29 34"><g fill="#1e90ff"><path d="M6.1 11.2 L22.8 11.2 L22.8 9.4 C22.8 6.4 21 4.2 18.4 3.4 L18.4 11.2 L10.4 11.2 L10.4 3.4 C7.9 4.2 6.1 6.4 6.1 9.4Z"/><rect x="11.2" y="0.8" width="6.4" height="10.4" rx="0.6"/><path d="M8.2 12.6 L21.4 12.6 C21.4 16.6 18.4 19.2 14.8 19.2 C11.2 19.2 8.2 16.6 8.2 12.6Z"/><path d="M0.1 33.3 L0.1 31 C0.1 26.3 6.3 23 14.3 23 C22.3 23 28.5 26.3 28.5 31 L28.5 33.3Z"/></g></svg>
<svg class="s" style="left:152.8px;top:67px;" width="29" height="25" viewBox="0 0 29 25"><rect x="0" y="0" width="28.3" height="7" rx="2" fill="#e0e0e0"/><circle cx="19.8" cy="3.5" r="1.2" fill="#333"/><circle cx="23.8" cy="3.5" r="1.2" fill="#333"/><rect x="0" y="8.7" width="28.3" height="7" rx="2" fill="#e0e0e0"/><circle cx="19.8" cy="12.2" r="1.2" fill="#333"/><circle cx="23.8" cy="12.2" r="1.2" fill="#333"/><rect x="0" y="17.6" width="28.3" height="7" rx="2" fill="#e0e0e0"/><circle cx="19.8" cy="21.1" r="1.2" fill="#333"/><circle cx="23.8" cy="21.1" r="1.2" fill="#333"/></svg>
<svg class="s" style="left:287px;top:65px;" width="26" height="29" viewBox="0 0 26 29"><g fill="#e0e0e0"><path d="M0.3 6.5 Q0.3 5.5 1.3 5.5 L6.2 5.5 L6.2 22 Q6.2 24.5 8.7 24.5 L18 24.5 L18 27.8 Q18 28.8 17 28.8 L1.3 28.8 Q0.3 28.8 0.3 27.8Z"/><path d="M7.7 1 Q7.7 0 8.7 0 L18.3 0 L18.3 6.5 L25 6.5 L25 22 Q25 23 24 23 L8.7 23 Q7.7 23 7.7 22Z"/><path d="M19.9 0.2 L25 5.3 L19.9 5.3Z"/></g></svg>
<svg class="s" style="left:441.5px;top:65px;" width="29" height="29" viewBox="0 0 29 29"><g transform="translate(14.3 14.2)" fill="#e0e0e0"><circle r="11.6"/><rect x="-2" y="-14.1" width="4" height="5" transform="rotate(0)"/><rect x="-2" y="-14.1" width="4" height="5" transform="rotate(30)"/><rect x="-2" y="-14.1" width="4" height="5" transform="rotate(60)"/><rect x="-2" y="-14.1" width="4" height="5" transform="rotate(90)"/><rect x="-2" y="-14.1" width="4" height="5" transform="rotate(120)"/><rect x="-2" y="-14.1" width="4" height="5" transform="rotate(150)"/><rect x="-2" y="-14.1" width="4" height="5" transform="rotate(180)"/><rect x="-2" y="-14.1" width="4" height="5" transform="rotate(210)"/><rect x="-2" y="-14.1" width="4" height="5" transform="rotate(240)"/><rect x="-2" y="-14.1" width="4" height="5" transform="rotate(270)"/><rect x="-2" y="-14.1" width="4" height="5" transform="rotate(300)"/><rect x="-2" y="-14.1" width="4" height="5" transform="rotate(330)"/></g><g transform="translate(14.3 14.2)" fill="#222"><path d="M1.12 -4.87 L1.98 -8.57 A8.8 8.8 0 0 1 7.54 -4.53 L4.29 -2.58 A5.0 5.0 0 0 0 1.12 -4.87Z"/><path d="M4.98 -0.44 L8.77 -0.77 A8.8 8.8 0 0 1 6.64 5.77 L3.77 3.28 A5.0 5.0 0 0 0 4.98 -0.44Z"/><path d="M1.95 4.60 L3.44 8.10 A8.8 8.8 0 0 1 -3.44 8.10 L-1.95 4.60 A5.0 5.0 0 0 0 1.95 4.60Z"/><path d="M-3.77 3.28 L-6.64 5.77 A8.8 8.8 0 0 1 -8.77 -0.77 L-4.98 -0.44 A5.0 5.0 0 0 0 -3.77 3.28Z"/><path d="M-4.29 -2.58 L-7.54 -4.53 A8.8 8.8 0 0 1 -1.98 -8.57 L-1.12 -4.87 A5.0 5.0 0 0 0 -4.29 -2.58Z"/><circle r="1.8"/></g></svg>
<svg class="s" style="left:578.5px;top:65px;" width="26" height="29" viewBox="0 0 26 29"><g fill="#e0e0e0"><ellipse cx="12.6" cy="5.6" rx="12.5" ry="5.5"/><path d="M0.1 8 C2 11 7 12.8 12.6 12.8 C18.2 12.8 23.2 11 25.1 8 L25.1 14.5 C23.2 17.8 18.2 19.8 12.6 19.8 C7 19.8 2 17.8 0.1 14.5Z"/><path d="M0.1 16.6 C2 19.8 7 21.8 12.6 21.8 C18.2 21.8 23.2 19.8 25.1 16.6 L25.1 23.4 C25.1 26.4 19.5 28.6 12.6 28.6 C5.7 28.6 0.1 26.4 0.1 23.4Z"/></g></svg>
<svg class="s" style="left:710.9px;top:65.1px;" width="29" height="29" viewBox="0 0 29 29"><g stroke="#e0e0e0" fill="none"><path d="M3.4 3.4 L13 13" stroke-width="5.6" stroke-linecap="round"/><path d="M17 17 L25.4 25.4" stroke-width="6.6" stroke-linecap="round"/><path d="M19.2 9.8 L4.6 24.4" stroke-width="5.2" stroke-linecap="round"/></g><circle cx="22.2" cy="6.8" r="6.6" fill="#e0e0e0"/><path d="M22.6 6.4 L26.5 2.5 L31 7 L27 11Z" fill="#222"/><path d="M22.2 6.8 L28 1 L29.5 -1 L31 0.5 L29 2.5Z" fill="#222"/><circle cx="4.4" cy="24.6" r="1.2" fill="#222"/></svg>
<svg class="s" style="left:824.2px;top:65.5px;" width="22" height="29" viewBox="0 0 22 29"><g fill="#e0e0e0"><rect x="3.6" y="0" width="3.2" height="8" rx="1.6"/><rect x="14.4" y="0" width="3.2" height="8" rx="1.6"/><path d="M0 9 Q0 8 1 8 L20.3 8 Q21.3 8 21.3 9 L21.3 10.6 Q21.3 11.6 20.3 11.6 L19.6 11.6 Q19.6 20 12.2 22.2 L12.2 28.2 L9.1 28.2 L9.1 22.2 Q1.7 20 1.7 11.6 L1 11.6 Q0 11.6 0 10.6Z"/></g></svg>
<svg class="s" style="left:951.6px;top:65px;" width="28" height="29" viewBox="0 0 28 29"><g transform="translate(13.8 14.2)" fill="#e0e0e0"><circle r="10.6"/><rect x="-3.6" y="-14.1" width="7.2" height="6" rx="0.8" transform="rotate(0)"/><rect x="-3.6" y="-14.1" width="7.2" height="6" rx="0.8" transform="rotate(60)"/><rect x="-3.6" y="-14.1" width="7.2" height="6" rx="0.8" transform="rotate(120)"/><rect x="-3.6" y="-14.1" width="7.2" height="6" rx="0.8" transform="rotate(180)"/><rect x="-3.6" y="-14.1" width="7.2" height="6" rx="0.8" transform="rotate(240)"/><rect x="-3.6" y="-14.1" width="7.2" height="6" rx="0.8" transform="rotate(300)"/></g><circle cx="13.8" cy="14.2" r="4.7" fill="#222"/></svg>
<svg class="s" style="left:1092.4px;top:65px;" width="29" height="29" viewBox="0 0 29 29"><circle cx="14.5" cy="14.4" r="12.45" fill="none" stroke="#e0e0e0" stroke-width="3.1"/><path d="M10 10.2 Q10 6.6 14.5 6.6 Q19 6.6 19 10.2 Q19 12.4 16.8 14.2 Q15 15.6 15 17.6 L15 18.4" fill="none" stroke="#e0e0e0" stroke-width="3.1"/><rect x="13.3" y="20.1" width="3.2" height="3.1" fill="#e0e0e0"/></svg>
<svg class="s" style="left:1195.4px;top:63.5px;" width="28" height="33" viewBox="0 0 28 33"><path d="M13.9 0.2 C19.4 0.2 22.2 4.5 22.2 8.6 C22.2 13 17.5 19 13.9 24.5 C10.3 19 5.6 13 5.6 8.6 C5.6 4.5 8.4 0.2 13.9 0.2Z" fill="#e0e0e0"/><circle cx="13.9" cy="8.4" r="3.6" fill="#222"/><path d="M3.4 22.5 L1.6 30.6 L26.2 30.6 L24.4 22.5" fill="none" stroke="#e0e0e0" stroke-width="3" stroke-linejoin="round"/></svg>
<svg class="s" style="left:1720px;top:61px;" width="44" height="38" viewBox="0 0 44 38"><path d="M10.3 18.7 A14.6 14.6 0 1 1 14.5 29.2" fill="none" stroke="#e0e0e0" stroke-width="4.4"/><path d="M2.6 18.7 L16.9 19.2 L9.8 26Z" fill="#e0e0e0"/><path d="M24.3 11.3 L24.3 19.6 L31 24" fill="none" stroke="#e0e0e0" stroke-width="3"/></svg>
<svg class="s" style="left:1767.5px;top:63.5px;" width="37" height="33" viewBox="0 0 37 33"><path d="M2.5 3.7 L9 3.7 L11.5 0.8 Q12 0.5 13 0.5 L24.5 0.5 Q25.5 0.5 26 1 L28.5 3.7 L33 3.7 Q35.6 3.7 35.6 6.3 L35.6 29.8 Q35.6 32.3 33 32.3 L3 32.3 Q0.5 32.3 0.5 29.8 L0.5 6.3 Q0.5 3.7 2.5 3.7Z" fill="#e0e0e0"/><circle cx="18" cy="18" r="6.95" fill="none" stroke="#222" stroke-width="3.1"/></svg>
<svg class="s" style="left:1814px;top:61.8px;" width="35" height="40" viewBox="0 0 35 40"><path d="M3.6 0.2 L30.4 0.2 Q34 0.2 34 3.8 L34 39 L25.4 34.1 L3.6 34.1 Q0.2 34.1 0.2 30.6 L0.2 3.8 Q0.2 0.2 3.6 0.2Z" fill="#e0e0e0"/><path d="M9.5 12.2 Q11.5 10 14.6 9.5 L15.2 10.6 Q17.1 10.3 19 10.6 L19.6 9.5 Q22.7 10 24.7 12.2 Q28 17.4 27.9 23.3 Q25.6 25.2 22.4 25.4 L21.1 23.6 Q22.5 23.1 23.4 22.2 Q17.1 25.2 10.8 22.2 Q11.7 23.1 13.1 23.6 L11.8 25.4 Q8.6 25.2 6.3 23.3 Q6.2 17.4 9.5 12.2Z" fill="#262626"/><ellipse cx="13.6" cy="18.7" rx="1.9" ry="2.1" fill="#eee"/><ellipse cx="20.8" cy="18.7" rx="1.9" ry="2.1" fill="#eee"/></svg>
<svg class="s" style="left:1855.5px;top:64px;" width="36" height="36" viewBox="0 0 36 36"><circle cx="17.7" cy="17.1" r="17.5" fill="#80fdd2"/><path d="M26.3 10.7 L7.2 17.8 L11.8 19.9 L24.6 12.4Z" fill="#232323"/><path d="M26.6 11.6 L14.4 21.1 L14.7 25.8 L17.4 22.9 L22.4 26.5Z" fill="#232323"/></svg>
<svg class="s" style="left:1366px;top:788px;" width="29" height="29" viewBox="0 0 29 29"><path d="M13.1 3.6 A11 11 0 1 0 23.9 17.8" fill="none" stroke="#e0e0e0" stroke-width="4.5"/><path d="M16.1 3.6 A11 11 0 0 1 24.6 15.6" fill="none" stroke="#e0e0e0" stroke-width="4.5"/></svg>
<svg class="s" style="left:1628.9px;top:787.9px;" width="28" height="28" viewBox="0 0 28 28"><circle cx="14" cy="14" r="11.5" fill="none" stroke="#e0e0e0" stroke-width="3"/><g stroke="#e0e0e0" stroke-width="2.4"><path d="M14 2.5 L14 6"/><path d="M6 6 L8.4 8.4"/><path d="M22 6 L19.6 8.4"/><path d="M2.5 14 L5.8 14"/><path d="M25.5 14 L22.2 14"/><path d="M14 9 L14 17"/></g><path d="M3 17.4 L25 17.4 L25 18.6 Q20 22 14 22 Q8 22 3 18.6Z" fill="#e0e0e0"/><circle cx="14" cy="17.6" r="3.6" fill="#e0e0e0"/><circle cx="14" cy="17.6" r="1.3" fill="#222"/></svg>
<svg class="s" style="left:32px;top:1024px;" width="36" height="36" viewBox="0 0 36 36"><path d="M17.5 0.5 L17.5 9 L32 9 Q35.5 9 35.5 12.5 L35.5 22 Q35.5 25.5 32 25.5 L17.5 25.5 L17.5 34.8 Q17 35.5 16 34.6 L0.6 18.5 Q0 17.8 0.6 17 L16 1 Q17.2 -0.2 17.5 0.5Z" fill="#fff"/></svg>
<svg class="s" style="left:1886px;top:1064.8px;" width="19" height="19" viewBox="0 0 19 19"><path d="M18 0.5 L18 4.5 L4.5 18 L0.5 18Z M18 6.5 L18 10.5 L10.5 18 L6.5 18Z M18 12.5 L18 18 L12.5 18Z" fill="#fff"/></svg>
</body></html>
